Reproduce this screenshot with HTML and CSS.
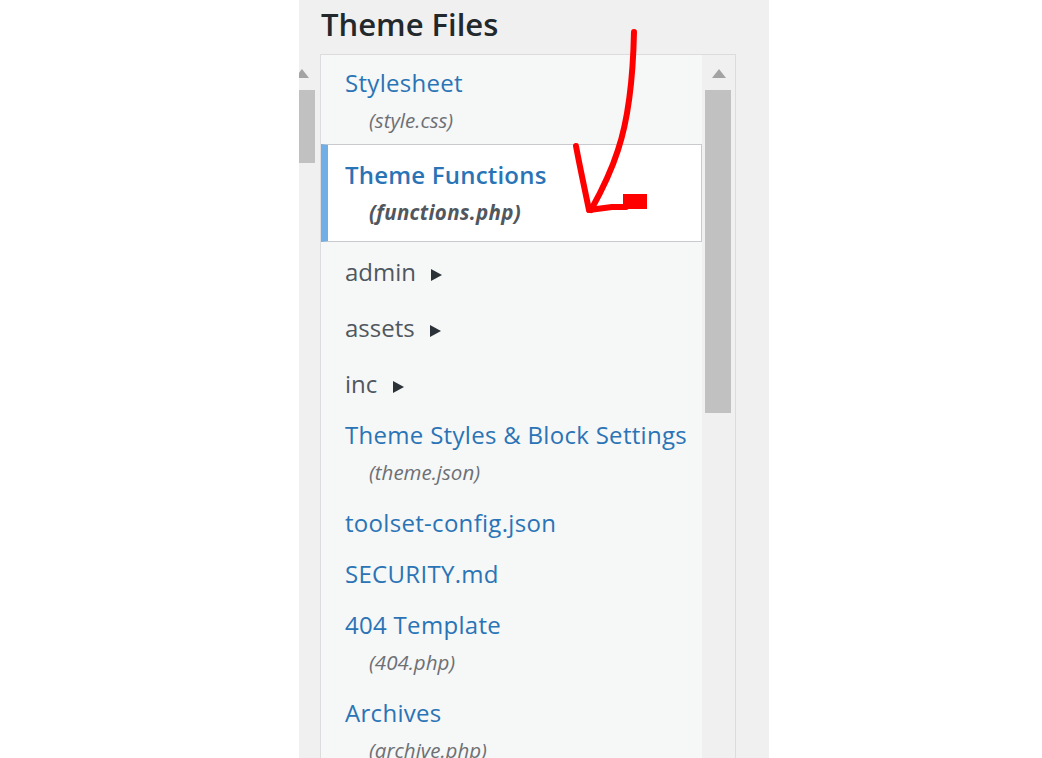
FILE: index.html
```html
<!DOCTYPE html>
<html lang="en">
<head>
    <meta charset="UTF-8">
    <title>Theme Files</title>
    <link rel="stylesheet" href="styles.css">
</head>
<body>
    <div class="panel">
        <h2 class="panel-title">Theme Files</h2>
        <div class="panel-body">
            <div class="side-scroll">
                <div class="scroll-arrow"></div>
                <div class="side-thumb"></div>
            </div>
            <div class="file-box">
                <ul class="files">
                    <li class="file">
                        <a href="#">Stylesheet</a>
                        <span class="nonessential">(style.css)</span>
                    </li>
                    <li class="file current">
                        <a href="#">Theme Functions</a>
                        <span class="nonessential">(functions.php)</span>
                    </li>
                    <li class="folder">admin <span class="caret"></span></li>
                    <li class="folder">assets <span class="caret"></span></li>
                    <li class="folder">inc <span class="caret"></span></li>
                    <li class="file">
                        <a href="#">Theme Styles &amp; Block Settings</a>
                        <span class="nonessential">(theme.json)</span>
                    </li>
                    <li class="file"><a href="#">toolset-config.json</a></li>
                    <li class="file"><a href="#">SECURITY.md</a></li>
                    <li class="file">
                        <a href="#">404 Template</a>
                        <span class="nonessential">(404.php)</span>
                    </li>
                    <li class="file">
                        <a href="#">Archives</a>
                        <span class="nonessential">(archive.php)</span>
                    </li>
                </ul>
                <div class="track">
                    <div class="scroll-arrow"></div>
                    <div class="thumb"></div>
                </div>
            </div>
        </div>
    </div>

    <!-- hand drawn arrow pointing at functions.php -->
    <svg class="marker" width="1042" height="758" viewBox="0 0 1042 758">
        <g fill="none" stroke="#ff0000" stroke-width="6" stroke-linecap="round" stroke-linejoin="round">
            <path d="M634 32 C633 80 628 120 618 150 C611 172 601 192 591 210"/>
            <path d="M576 146 C580 168 585 190 589 210"/>
            <path d="M589 210 L612 207 L626 207"/>
        </g>
        <rect x="623" y="194" width="24" height="15" fill="#ff0000"/>
    </svg>
</body>
</html>
```

FILE: styles.css
```css
body {
    margin: 0;
    background-color: #fff;
    font-family: 'Open Sans', 'Noto Sans', sans-serif;
    overflow: hidden;
}
.panel {
    margin-left: 299px;
    width: 470px;
    height: 758px;
    background-color: #f0f0f1;
    overflow: hidden;
}
.panel-title {
    margin: 0;
    height: 54px;
    padding-left: 22px;
    font-size: 31px;
    font-weight: 600;
    line-height: 48px;
    color: #23282d;
}
.panel-body {
    display: flex;
}
.side-scroll {
    width: 21px;
    overflow: hidden;
}
.scroll-arrow {
    width: 0;
    height: 0;
    margin: 15px auto 0 auto;
    border-left: 7px solid transparent;
    border-right: 7px solid transparent;
    border-bottom: 9px solid #a3a3a3;
}
.side-scroll .scroll-arrow {
    margin-left: -4px;
}
.side-thumb {
    width: 16px;
    height: 73px;
    margin-top: 12px;
    background-color: #c1c1c1;
}
.file-box {
    display: flex;
    width: 414px;
    height: 720px;
    border: 1px solid #dcdcde;
    background-color: #f6f7f7;
}
.files {
    list-style: none;
    margin: 0;
    padding: 9px 0 0 0;
    width: 381px;
}
.file {
    margin-bottom: 13px;
}
.file a {
    display: block;
    padding-left: 24px;
    font-size: 24px;
    line-height: 38px;
    letter-spacing: 0.3px;
    color: #2a74b6;
    text-decoration: none;
    white-space: nowrap;
}
.nonessential {
    display: block;
    padding-left: 48px;
    font-size: 20.5px;
    font-style: italic;
    line-height: 37px;
    color: #6c7075;
}
.file:first-child {
    margin-bottom: 5px;
}
.current {
    margin-bottom: 6px;
    padding: 11px 0 10px 0;
    background-color: #fff;
    border: 1px solid #c9cacd;
    border-left: 7px solid #72aee6;
}
.current a {
    padding-left: 17px;
    font-weight: 600;
    letter-spacing: 0.2px;
}
.current .nonessential {
    padding-left: 41px;
    font-weight: 700;
    letter-spacing: 0.3px;
    color: #50575e;
}
.folder {
    padding: 5px 0 0 24px;
    margin-bottom: 13px;
    font-size: 24px;
    line-height: 38px;
    color: #50575e;
}
.caret {
    display: inline-block;
    width: 0;
    height: 0;
    margin-left: 9px;
    border-top: 6px solid transparent;
    border-bottom: 6px solid transparent;
    border-left: 11px solid #2c3338;
}
.track {
    width: 33px;
    background-color: #f0f0f0;
}
.track .scroll-arrow {
    margin-top: 14px;
}
.thumb {
    width: 26px;
    height: 323px;
    margin: 12px 0 0 3px;
    background-color: #c1c1c1;
}
.marker {
    position: absolute;
    left: 0;
    top: 0;
    pointer-events: none;
}
```
